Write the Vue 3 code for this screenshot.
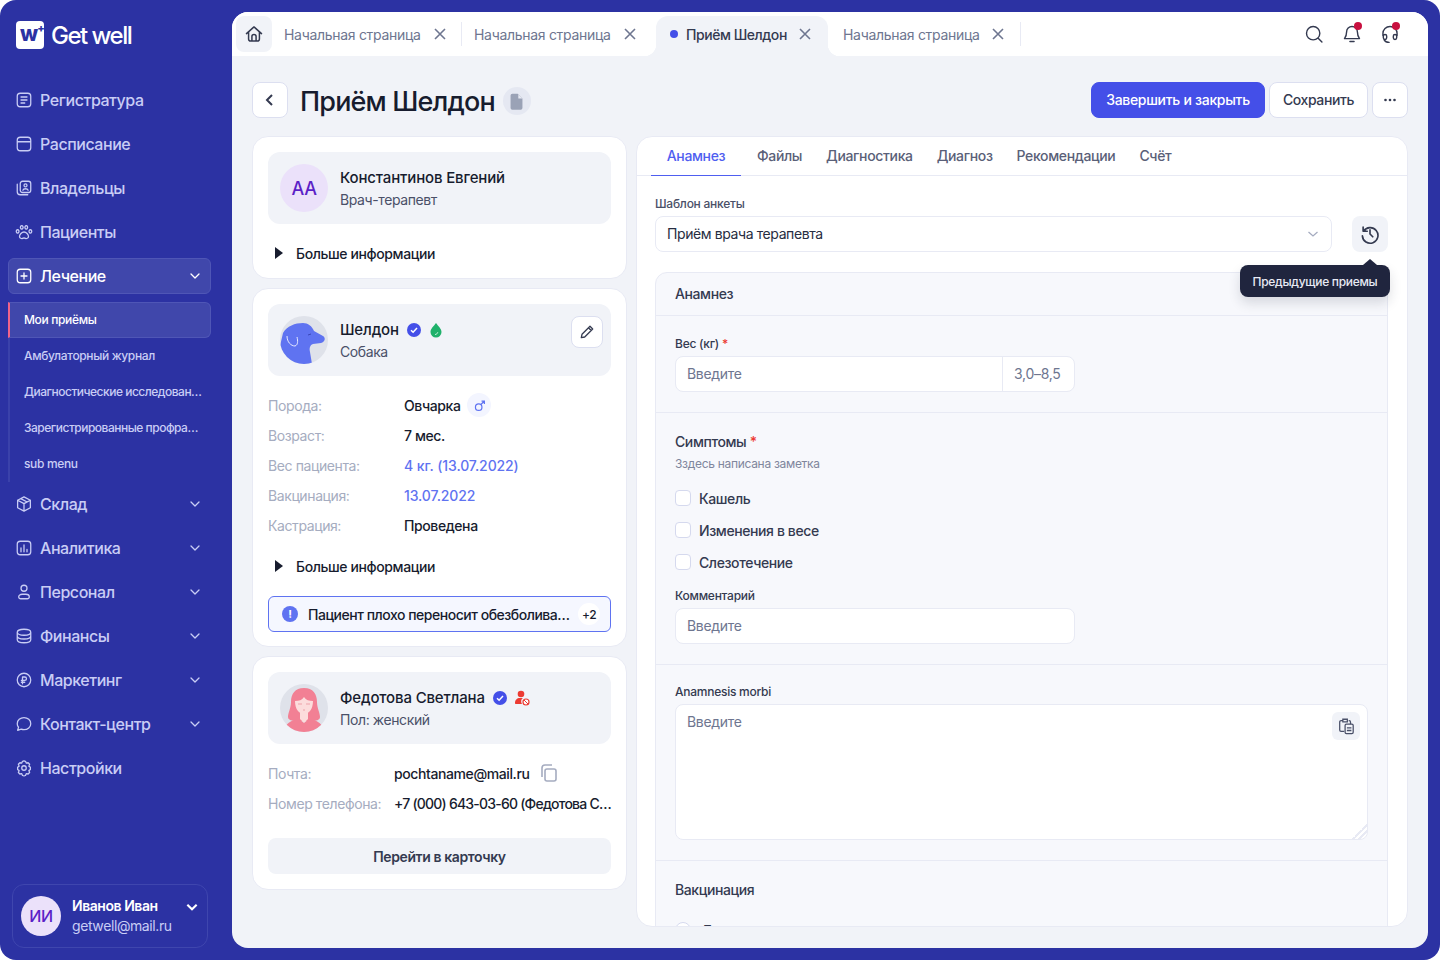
<script setup>
// пункты бокового меню
const menuTop = [
  { label: 'Регистратура', d: 'M7 3h10a4 4 0 0 1 4 4v10a4 4 0 0 1-4 4H7a4 4 0 0 1-4-4V7a4 4 0 0 1 4-4z M8 8h8 M8 12h8 M8 16h5' },
  { label: 'Расписание', d: 'M7 3h10a4 4 0 0 1 4 4v10a4 4 0 0 1-4 4H7a4 4 0 0 1-4-4V7a4 4 0 0 1 4-4z M3 9h18' },
  { label: 'Владельцы', d: 'M10 3h8a3 3 0 0 1 3 3v9a3 3 0 0 1-3 3h-8a3 3 0 0 1-3-3V6a3 3 0 0 1 3-3z M3 7v10a4 4 0 0 0 4 4h10 M14 6.500a2 2 0 1 0 0 4 2 2 0 0 0 0-4z M10.500 15c.5-1.500 2-2 3.500-2s3 .5 3.500 2' },
  { label: 'Пациенты', d: 'M12 12c-3 0-6 3.500-6 6 0 2.500 3 3 4 2.500s3-.5 4 0 4 0 4-2.500c0-2.500-3-6-6-6z M9 3.500a1.800 2.300 0 1 0 .01 0z M15 3.500a1.800 2.300 0 1 0 .01 0z M3.500 9a1.800 2.200 0 1 0 .01 0z M20.500 9a1.800 2.200 0 1 0 .01 0z' }
]

const menuBottom = [
  { label: 'Склад', arrow: true, d: 'M12 2.500l8.500 4.500v10L12 21.500 3.500 17V7z M3.500 7L12 11.500 20.500 7 M12 11.500v10 M7.700 4.800l8.500 4.500' },
  { label: 'Аналитика', arrow: true, d: 'M7 3h10a4 4 0 0 1 4 4v10a4 4 0 0 1-4 4H7a4 4 0 0 1-4-4V7a4 4 0 0 1 4-4z M8 17v-5 M12 17V8 M16 17v-3' },
  { label: 'Персонал', arrow: true, d: 'M12 3a4 4 0 1 0 0 8 4 4 0 0 0 0-8z M9.500 15h5a4.500 3 0 0 1 4.500 3v.5a2.500 2.500 0 0 1-2.500 2.500h-9A2.500 2.500 0 0 1 5 18.500V18a4.500 3 0 0 1 4.500-3z' },
  { label: 'Финансы', arrow: true, d: 'M12 3c5 0 9 1.500 9 4s-4 4-9 4-9-1.500-9-4 4-4 9-4z M3 7v10c0 2.500 4 4 9 4s9-1.500 9-4V7 M3 12c0 2.500 4 4 9 4s9-1.500 9-4' },
  { label: 'Маркетинг', arrow: true, d: 'M12 3a9 9 0 1 0 0 18 9 9 0 0 0 0-18z M10 17V8h3a2.300 2.300 0 0 1 0 4.600H8.500 M8.500 15H13' },
  { label: 'Контакт-центр', arrow: true, d: 'M12 3.500c5 0 9 3.400 9 8s-4 8-9 8c-1.300 0-2.600-.2-3.700-.7L3.500 20.500l1.200-4.200C3.700 15 3 13.300 3 11.500c0-4.600 4-8 9-8z' },
  { label: 'Настройки', arrow: false, d: 'M12 15a3 3 0 1 0 0-6 3 3 0 0 0 0 6z M12 2.500l2 .5 1 2.500 2.500-.5 2 2-1 2.500 2 1.500v3l-2 1.500 1 2.500-2 2-2.500-.5-1 2.500-2 .5-2-.5-1-2.500-2.500.5-2-2 1-2.500-2-1.500v-3l2-1.500-1-2.500 2-2 2.500.5 1-2.500z' }
]

const subMenu = ['Мои приёмы', 'Амбулаторный журнал', 'Диагностические исследован…', 'Зарегистрированные профра…', 'sub menu']

const contentTabs = ['Анамнез', 'Файлы', 'Диагностика', 'Диагноз', 'Рекомендации', 'Счёт']

const symptoms = ['Кашель', 'Изменения в весе', 'Слезотечение']
</script>

<template>
  <div class="app">
    <!-- боковое меню -->
    <aside class="sidebar">
      <div class="logo">
        <span class="logo-mark"><span>w</span><i>+</i></span>
        <span class="logo-text">Get well</span>
      </div>

      <nav class="nav">
        <a v-for="item in menuTop" :key="item.label" class="nav-item">
          <svg class="nav-icon" viewBox="0 0 24 24"><path :d="item.d" /></svg>
          {{ item.label }}
        </a>

        <a class="nav-item open">
          <svg class="nav-icon" viewBox="0 0 24 24"><path d="M7 3h10a4 4 0 0 1 4 4v10a4 4 0 0 1-4 4H7a4 4 0 0 1-4-4V7a4 4 0 0 1 4-4z M12 8v8 M8 12h8" /></svg>
          Лечение
          <svg class="chev" viewBox="0 0 12 12"><path d="M2 4l4 4 4-4" /></svg>
        </a>
        <div class="submenu">
          <a v-for="(s, i) in subMenu" :key="s" class="sub-item" :class="{ active: i === 0, long: i === 2 || i === 3 }">{{ s }}</a>
        </div>

        <a v-for="item in menuBottom" :key="item.label" class="nav-item">
          <svg class="nav-icon" viewBox="0 0 24 24"><path :d="item.d" /></svg>
          {{ item.label }}
          <svg v-if="item.arrow" class="chev" viewBox="0 0 12 12"><path d="M2 4l4 4 4-4" /></svg>
        </a>
      </nav>

      <div class="user">
        <div class="user-ava">ИИ</div>
        <div class="user-info">
          <div class="user-name">Иванов Иван</div>
          <div class="user-mail">getwell@mail.ru</div>
        </div>
        <svg class="user-chev" viewBox="0 0 12 12"><path d="M2 4l4 4 4-4" /></svg>
      </div>
    </aside>

    <main class="main">
      <!-- вкладки -->
      <header class="topbar">
        <button class="home">
          <svg viewBox="0 0 24 24"><path d="M3 11.500L12 3.500l9 8 M5.500 9.500V18a2.500 2.500 0 0 0 2.500 2.500h8a2.500 2.500 0 0 0 2.500-2.500V9.500 M9.500 20.500V15a2.500 2.500 0 0 1 5 0v5.500" /></svg>
        </button>
        <div class="tab first">
          <span>Начальная страница</span>
          <svg class="close" viewBox="0 0 16 16"><path d="M3 3l10 10M13 3L3 13" /></svg>
        </div>
        <div class="tab plain">
          <span>Начальная страница</span>
          <svg class="close" viewBox="0 0 16 16"><path d="M3 3l10 10M13 3L3 13" /></svg>
        </div>
        <div class="tab current">
          <i class="dot"></i>
          <span>Приём Шелдон</span>
          <svg class="close" viewBox="0 0 16 16"><path d="M3 3l10 10M13 3L3 13" /></svg>
        </div>
        <div class="tab last">
          <span>Начальная страница</span>
          <svg class="close" viewBox="0 0 16 16"><path d="M3 3l10 10M13 3L3 13" /></svg>
        </div>
        <div class="top-icons">
          <span class="top-icon">
            <svg viewBox="0 0 24 24"><path d="M11 3a8 8 0 1 0 0 16 8 8 0 0 0 0-16z M17 17l4.500 4.500" /></svg>
          </span>
          <span class="top-icon">
            <svg viewBox="0 0 24 24"><path d="M12 3a6.500 6.500 0 0 0-6.500 6.500c0 4.500-1 6-2.500 8h18c-1.500-2-2.500-3.500-2.500-8A6.500 6.500 0 0 0 12 3z M9.500 21h5" /></svg>
            <i class="red"></i>
          </span>
          <span class="top-icon">
            <svg viewBox="0 0 24 24"><path d="M3.500 14v-2.500a8.500 8.500 0 0 1 17 0V14 M6 12.500a2 2 0 0 1 2 2v2a2 2 0 0 1-4 0v-2a2 2 0 0 1 2-2z M18 12.500a2 2 0 0 1 2 2v2a2 2 0 0 1-4 0v-2a2 2 0 0 1 2-2z M5 19c1 2 3 3 6 3" /></svg>
            <i class="red"></i>
          </span>
        </div>
      </header>

      <div class="page">
        <div class="page-head">
          <button class="icon-btn">
            <svg viewBox="0 0 16 16" class="back"><path d="M10 3L5 8l5 5" /></svg>
          </button>
          <h1>Приём Шелдон</h1>
          <span class="doc-badge">
            <svg viewBox="0 0 16 16"><path d="M4.500 1.500H9l4 4v8a1.500 1.500 0 0 1-1.500 1.500h-7A1.500 1.500 0 0 1 3 13.500V3a1.500 1.500 0 0 1 1.500-1.500z" /><path d="M9.500 2v3.500H13z" fill="#e5e8f2" /></svg>
          </span>
          <div class="head-actions">
            <button class="btn primary">Завершить и закрыть</button>
            <button class="btn save">Сохранить</button>
            <button class="icon-btn">
              <svg viewBox="0 0 16 16" class="more"><circle cx="3.500" cy="8" r="1.300" /><circle cx="8" cy="8" r="1.300" /><circle cx="12.500" cy="8" r="1.300" /></svg>
            </button>
          </div>
        </div>

        <div class="columns">
          <div class="left">
            <!-- врач -->
            <section class="card">
              <div class="person">
                <div class="ava-letters">АА</div>
                <div>
                  <div class="person-name">Константинов Евгений</div>
                  <div class="person-sub">Врач-терапевт</div>
                </div>
              </div>
              <div class="more-info first-more"><i class="tri"></i>Больше информации</div>
            </section>

            <!-- пациент -->
            <section class="card pet-card">
              <div class="person">
                <svg class="ava" viewBox="0 0 48 48">
                  <defs><clipPath id="c1"><circle cx="24" cy="24" r="24" /></clipPath></defs>
                  <circle cx="24" cy="24" r="24" fill="#dfe2ea" />
                  <g clip-path="url(#c1)">
                    <path d="M3 17C7 10 15 7 23 7c5 0 9 3 11 8l9 5c3 2 2 6-2 7l-8 1c-3 1-4 4-3 8l2 12H0V30z" fill="#5f73f1" />
                    <path d="M7 20c0 6 4 10 8 10 3-1 3-5 2-9" fill="none" stroke="#e8ebff" stroke-width="1" />
                    <path d="M28 19l3-1" stroke="#3a47b8" stroke-width="1" />
                  </g>
                </svg>
                <div>
                  <div class="person-name">Шелдон
                    <svg class="check" viewBox="0 0 16 16"><circle cx="8" cy="8" r="7" fill="#444fe8" /><path d="M5 8.200l2.100 2L11 6" fill="none" stroke="#fff" stroke-width="1.500" /></svg>
                    <svg class="drop" viewBox="0 0 16 16"><path d="M8 1c2 3 5.500 5.500 5.500 9a5.500 5.500 0 0 1-11 0c0-3.500 3.500-6 5.500-9z" fill="#1fb16b" /><path d="M7 12.500c1.500 0 2.500-1 2.800-2.300" fill="none" stroke="#bff0d6" stroke-width="1" /></svg>
                  </div>
                  <div class="person-sub">Собака</div>
                </div>
                <button class="edit">
                  <svg viewBox="0 0 16 16"><path d="M11 2.300l2.700 2.700-8 8-3.400.7.700-3.400z M9.500 3.800l2.700 2.700" /></svg>
                </button>
              </div>

              <dl class="rows pet-rows">
                <dt>Порода:</dt>
                <dd>Овчарка
                  <span class="gender">
                    <svg viewBox="0 0 16 16"><path d="M7 6a4 4 0 1 0 0 8 4 4 0 0 0 0-8z M10 6.500L14 2.500 M10.500 2.500H14V6" /></svg>
                  </span>
                </dd>
                <dt>Возраст:</dt><dd>7 мес.</dd>
                <dt>Вес пациента:</dt><dd class="link">4 кг. (13.07.2022)</dd>
                <dt>Вакцинация:</dt><dd class="link">13.07.2022</dd>
                <dt>Кастрация:</dt><dd>Проведена</dd>
              </dl>

              <div class="more-info"><i class="tri"></i>Больше информации</div>

              <div class="alert">
                <span class="alert-icon">!</span>
                <span class="alert-text">Пациент плохо переносит обезболива…</span>
                <span class="alert-count">+2</span>
              </div>
            </section>

            <!-- владелец -->
            <section class="card">
              <div class="person">
                <svg class="ava" viewBox="0 0 48 48">
                  <defs><clipPath id="c2"><circle cx="24" cy="24" r="24" /></clipPath></defs>
                  <circle cx="24" cy="24" r="24" fill="#dfe2ea" />
                  <g clip-path="url(#c2)">
                    <path d="M24 4c-9 0-13 6-13 14 0 6-3 11-3 15 0 3 4 4 8 4h16c4 0 8-1 8-4 0-4-3-9-3-15 0-8-4-14-13-14z" fill="#f28094" />
                    <path d="M15 17c4 0 7-1 9-4 2 3 5 4 9 4 0 8-4 13-9 13s-9-5-9-13z" fill="#fcdcdc" />
                    <path d="M20 27h8v8l-4 4-4-4z" fill="#fcdcdc" />
                    <path d="M4 48c0-8 7-12 15-13l5 4 5-4c8 1 15 5 15 13z" fill="#f28094" />
                    <path d="M18 20h4M26 20h4M23 26h2" stroke="#e78b96" stroke-width=".7" />
                  </g>
                </svg>
                <div>
                  <div class="person-name">Федотова Светлана
                    <svg class="check" viewBox="0 0 16 16"><circle cx="8" cy="8" r="7" fill="#444fe8" /><path d="M5 8.200l2.100 2L11 6" fill="none" stroke="#fff" stroke-width="1.500" /></svg>
                    <svg class="blocked" viewBox="0 0 16 16"><circle cx="7" cy="4" r="3.300" fill="#ec3a32" /><path d="M1 13c0-3 2-5 5-5h3c-2 1-2.500 4-1 6H2c-.7 0-1-.4-1-1z" fill="#ec3a32" /><circle cx="12" cy="12" r="3" fill="#fff" stroke="#ec3a32" stroke-width="1.200" /><path d="M10 10l4 4" stroke="#ec3a32" stroke-width="1" /></svg>
                  </div>
                  <div class="person-sub">Пол: женский</div>
                </div>
              </div>

              <dl class="rows owner-rows">
                <dt>Почта:</dt>
                <dd>pochtaname@mail.ru
                  <svg class="copy" viewBox="0 0 18 18"><path d="M7 5h7a2 2 0 0 1 2 2v8a2 2 0 0 1-2 2H7a2 2 0 0 1-2-2V7a2 2 0 0 1 2-2z M2 13V4a3 3 0 0 1 3-3h7" /></svg>
                </dd>
                <dt>Номер телефона:</dt>
                <dd class="cut">+7 (000) 643-03-60 (Федотова С…</dd>
              </dl>

              <button class="go-card">Перейти в карточку</button>
            </section>
          </div>

          <!-- анкета -->
          <section class="form-card">
            <div class="form-tabs">
              <span v-for="(t, i) in contentTabs" :key="t" class="form-tab" :class="{ active: i === 0 }">{{ t }}</span>
            </div>

            <div class="form-body">
              <label class="lbl">Шаблон анкеты</label>
              <div class="template-row">
                <div class="select">
                  Приём врача терапевта
                  <svg class="select-chev" viewBox="0 0 12 12"><path d="M1.500 4l4.500 4 4.500-4" /></svg>
                </div>
                <div class="history-wrap">
                  <button class="history">
                    <svg viewBox="0 0 24 24"><path d="M4.500 4.500V9H9 M5 9a8.500 8.500 0 1 1-1.300 5 M12 7.500V12l3 3" /></svg>
                  </button>
                  <div class="tooltip">Предыдущие приемы</div>
                </div>
              </div>

              <div class="panel">
                <div class="panel-head">Анамнез</div>

                <div class="block">
                  <label class="lbl dark">Вес (кг) <b>*</b></label>
                  <div class="input-group">
                    <input type="text" placeholder="Введите" />
                    <span class="addon">3,0–8,5</span>
                  </div>
                </div>

                <div class="block">
                  <div class="block-title">Симптомы <b>*</b></div>
                  <div class="note">Зздесь написана заметка</div>
                  <div class="checks">
                    <label v-for="s in symptoms" :key="s" class="check-row">
                      <i class="box"></i>{{ s }}
                    </label>
                  </div>
                  <label class="lbl dark comment">Комментарий</label>
                  <input class="field" type="text" placeholder="Введите" />
                </div>

                <div class="block morbi">
                  <label class="lbl dark">Anamnesis morbi</label>
                  <div class="area-wrap">
                    <textarea placeholder="Введите"></textarea>
                    <button class="paste">
                      <svg viewBox="0 0 20 20"><path d="M6 4H4.500A1.500 1.500 0 0 0 3 5.500v9A1.500 1.500 0 0 0 4.500 16H8 M6.500 2.500h5v3h-5z M13 4h.5A1.500 1.500 0 0 1 15 5.500V8" /><rect x="9" y="8" width="9" height="10.500" rx="1.500" /><path d="M11 12h5M11 15h5" /></svg>
                    </button>
                  </div>
                </div>

                <div class="block last-block">
                  <div class="block-title">Вакцинация</div>
                  <label class="radio-row"><i class="radio"></i>Да</label>
                </div>
              </div>
            </div>
          </section>
        </div>
      </div>
    </main>
  </div>
</template>

<style>
html, body { margin: 0; background: #fff; }
</style>

<style scoped>
* { box-sizing: border-box; }

.app {
  width: 1440px;
  height: 960px;
  display: flex;
  background: #2c32a3;
  border-radius: 16px;
  overflow: hidden;
  font-family: Inter, "Noto Sans", sans-serif;
  color: #171c2e;
  font-size: 14px;
  letter-spacing: -0.4px;
}

/* боковое меню */
.sidebar {
  width: 232px;
  flex: none;
  display: flex;
  flex-direction: column;
  padding-top: 21px;
  color: #c9cdf5;
}

.logo {
  display: flex;
  align-items: center;
  height: 28px;
  padding-left: 16px;
  gap: 7px;
}

.logo-mark {
  width: 28px;
  height: 28px;
  background: #fff;
  border-radius: 4px;
  color: #2c32a3;
  font-weight: 800;
  display: flex;
  align-items: flex-start;
  padding-left: 4px;
}

.logo-mark span {
  font-size: 21px;
  line-height: 26px;
  letter-spacing: -1px;
}

.logo-mark i {
  font-style: normal;
  font-size: 11px;
  line-height: 14px;
  font-weight: 800;
}

.logo-text {
  color: #fff;
  font-size: 24px;
  font-weight: 500;
  letter-spacing: -1.5px;
}

.nav {
  margin-top: 33px;
  display: flex;
  flex-direction: column;
  gap: 8px;
}

.nav-item {
  height: 36px;
  margin: 0 21px 0 8px;
  padding: 0 9px 1px 8px;
  display: flex;
  align-items: center;
  gap: 7px;
  font-size: 16px;
  font-weight: 500;
  letter-spacing: -0.45px;
  border: 1px solid transparent;
  border-radius: 6px;
}

.nav-item.open {
  background: #4047ab;
  border-color: #4f56b6;
  color: #fff;
}

.nav-icon {
  width: 18px;
  height: 18px;
  margin-left: -2px;
  flex: none;
  fill: none;
  stroke: currentColor;
  stroke-width: 1.700;
  stroke-linecap: round;
  stroke-linejoin: round;
}

.chev {
  width: 12px;
  height: 12px;
  margin-left: auto;
  fill: none;
  stroke: currentColor;
  stroke-width: 1.300;
  stroke-linecap: round;
  stroke-linejoin: round;
}

.submenu {
  margin: 0 21px -4px 8px;
  border-left: 2px solid #3b42ab;
}

.sub-item {
  height: 36px;
  display: flex;
  align-items: center;
  padding: 0 6px 1px 14px;
  font-size: 12px;
  font-weight: 500;
  letter-spacing: -0.35px;
  white-space: nowrap;
  border-radius: 0 6px 6px 0;
}

.sub-item.long { letter-spacing: -0.5px; }

.sub-item.active {
  margin-left: -2px;
  color: #fff;
  background: #4047ab;
  border: 1px solid #4f56b6;
  border-left: 2px solid #f0638a;
}

.user {
  margin: auto 24px 12px 12px;
  height: 64px;
  display: flex;
  align-items: center;
  padding: 0 8px;
  border: 1px solid #3f46ae;
  border-radius: 12px;
  position: relative;
}

.user-ava {
  width: 40px;
  height: 40px;
  border-radius: 50%;
  background: #ebe1fa;
  color: #5b1fc7;
  display: flex;
  align-items: center;
  justify-content: center;
  font-size: 16px;
  font-weight: 500;
  flex: none;
}

.user-info { margin-left: 11px; }

.user-name {
  color: #fff;
  font-weight: 600;
  line-height: 20px;
  letter-spacing: -0.45px;
}

.user-mail {
  color: #c9cdf5;
  line-height: 20px;
}

.user-chev {
  width: 14px;
  height: 14px;
  position: absolute;
  right: 8px;
  top: 15px;
  fill: none;
  stroke: #fff;
  stroke-width: 1.800;
}

/* основная часть */
.main {
  flex: 1;
  margin: 12px 12px 12px 0;
  border-radius: 16px;
  background: #f1f3f8;
  overflow: hidden;
  display: flex;
  flex-direction: column;
}

.topbar {
  height: 44px;
  flex: none;
  background: #fff;
  display: flex;
  align-items: flex-end;
  padding-left: 4px;
}

.home {
  width: 36px;
  height: 36px;
  align-self: flex-start;
  margin-top: 4px;
  border: 0;
  padding: 0;
  border-radius: 8px;
  background: #f1f3f8;
  display: flex;
  align-items: center;
  justify-content: center;
}

.home svg {
  width: 20px;
  height: 20px;
  fill: none;
  stroke: #343a50;
  stroke-width: 1.800;
  stroke-linejoin: round;
  stroke-linecap: round;
}

.tab {
  height: 40px;
  display: flex;
  align-items: center;
  color: #6e7690;
  font-size: 14px;
  letter-spacing: -0.3px;
  white-space: nowrap;
  position: relative;
  padding-bottom: 4px;
}

.tab.first {
  width: 190px;
  padding-left: 12px;
  gap: 11px;
}

.tab.plain {
  width: 194px;
  padding-left: 12px;
  gap: 11px;
}

.tab.first::after,
.tab.last::after {
  content: "";
  position: absolute;
  right: 0;
  top: 6px;
  height: 24px;
  width: 1px;
  background: #e8eaf4;
}

.tab.current {
  width: 172px;
  padding-left: 14px;
  color: #343a50;
  font-weight: 500;
  letter-spacing: -0.45px;
  background: #f1f3f8;
  border-radius: 12px 12px 0 0;
}

.tab.current::before,
.tab.current::after {
  content: "";
  position: absolute;
  bottom: 0;
  width: 12px;
  height: 12px;
}

.tab.current::before {
  left: -12px;
  background: radial-gradient(circle at 0 0, #fff 12px, #f1f3f8 12.500px);
}

.tab.current::after {
  right: -12px;
  background: radial-gradient(circle at 100% 0, #fff 12px, #f1f3f8 12.500px);
}

.tab.last {
  width: 193px;
  padding-left: 15px;
  gap: 10px;
}

.dot {
  width: 8px;
  height: 8px;
  border-radius: 50%;
  background: #444fe8;
  margin-right: 8px;
}

.close {
  width: 16px;
  height: 16px;
  flex: none;
  fill: none;
  stroke: #6e7690;
  stroke-width: 1.600;
}

.tab.current .close { margin-left: 10px; }

.top-icons {
  margin-left: auto;
  align-self: center;
  display: flex;
  gap: 22px;
  padding-right: 30px;
}

.top-icon {
  width: 16px;
  height: 18px;
  position: relative;
  display: block;
}

.top-icon svg {
  width: 20px;
  height: 20px;
  margin: -1px -2px;
  fill: none;
  stroke: #343a50;
  stroke-width: 1.700;
  stroke-linecap: round;
  stroke-linejoin: round;
}

.red {
  position: absolute;
  right: -2px;
  top: -3px;
  width: 8px;
  height: 8px;
  border-radius: 50%;
  background: #c8103f;
}

.page {
  flex: 1;
  min-height: 0;
  padding: 26px 20px 21px;
  display: flex;
  flex-direction: column;
}

.page-head {
  display: flex;
  align-items: center;
  height: 36px;
  flex: none;
}

h1 {
  margin: 0 0 0 12px;
  padding-top: 2px;
  font-size: 27px;
  font-weight: 500;
  letter-spacing: -0.83px;
  color: #171c2e;
}

.icon-btn {
  width: 36px;
  height: 36px;
  padding: 0;
  border: 1px solid #dcdff0;
  border-radius: 8px;
  background: #fff;
  display: flex;
  align-items: center;
  justify-content: center;
}

.back {
  width: 16px;
  height: 16px;
  fill: none;
  stroke: #343a50;
  stroke-width: 2;
}

.more {
  width: 16px;
  height: 16px;
  fill: #343a50;
}

.doc-badge {
  width: 28px;
  height: 28px;
  margin-left: 8px;
  margin-top: 2px;
  border-radius: 50%;
  background: #e5e8f2;
  display: flex;
  align-items: center;
  justify-content: center;
}

.doc-badge svg {
  width: 19px;
  height: 19px;
  fill: #9aa2b6;
}

.head-actions {
  margin-left: auto;
  display: flex;
  gap: 4px;
}

.btn {
  width: 99px;
  height: 36px;
  padding: 0 0 1px;
  background: #fff;
  border: 1px solid #dcdff0;
  border-radius: 8px;
  font-family: inherit;
  font-size: 14px;
  font-weight: 500;
  letter-spacing: inherit;
  color: #343a50;
}

.btn.primary {
  width: 174px;
  background: #444fe8;
  border-color: #444fe8;
  color: #fff;
  letter-spacing: -0.3px;
}

.columns {
  margin-top: 18px;
  flex: 1;
  min-height: 0;
  display: grid;
  grid-template-columns: 375px 772px;
  column-gap: 9px;
}

.left {
  display: flex;
  flex-direction: column;
  gap: 9px;
}

.card {
  background: #fff;
  border: 1px solid #e8eaf4;
  border-radius: 16px;
  padding: 15px;
}

.pet-card { padding-bottom: 14px; }

.person {
  height: 72px;
  background: #f1f3f8;
  border-radius: 12px;
  display: flex;
  align-items: center;
  padding: 0 8px 0 12px;
  gap: 12px;
  position: relative;
}

.ava-letters {
  width: 48px;
  height: 48px;
  border-radius: 50%;
  background: #ebe1fa;
  color: #5b1fc7;
  font-size: 18px;
  font-weight: 500;
  display: flex;
  align-items: center;
  justify-content: center;
  flex: none;
}

.ava {
  width: 48px;
  height: 48px;
  flex: none;
}

.person-name {
  font-size: 15px;
  font-weight: 500;
  line-height: 24px;
  letter-spacing: -0.15px;
  margin-top: 2px;
  display: flex;
  align-items: center;
}

.person-sub {
  color: #4a5068;
  line-height: 20px;
  margin: 0 0 2px;
}

.check {
  width: 16px;
  height: 16px;
  margin-left: 7px;
}

.drop {
  width: 16px;
  height: 16px;
  margin-left: 6px;
}

.blocked {
  width: 16px;
  height: 16px;
  margin-left: 6px;
}

.edit {
  position: absolute;
  right: 8px;
  top: 12px;
  width: 32px;
  height: 32px;
  padding: 0;
  background: #fff;
  border: 1px solid #dcdff0;
  border-radius: 8px;
  display: flex;
  align-items: center;
  justify-content: center;
}

.edit svg {
  width: 16px;
  height: 16px;
  fill: none;
  stroke: #343a50;
  stroke-width: 1.300;
  stroke-linejoin: round;
}

.more-info {
  height: 20px;
  margin-top: 16px;
  display: flex;
  align-items: center;
  font-weight: 500;
  padding-left: 7px;
}

.first-more {
  margin-top: 19px;
}

.tri {
  width: 0;
  height: 0;
  border-left: 8px solid #171c2e;
  border-top: 6px solid transparent;
  border-bottom: 6px solid transparent;
  margin-right: 13px;
}

.rows {
  margin: 14px 0 0;
  display: grid;
  grid-auto-rows: 30px;
  align-items: center;
}

.pet-rows { grid-template-columns: 136px 1fr; }

.owner-rows {
  grid-template-columns: 126px 218px;
}

dt { color: #a5acc0; }

dd {
  margin: 0;
  font-weight: 500;
  display: flex;
  align-items: center;
  min-width: 0;
}

dd.link {
  color: #5f73f1;
  letter-spacing: -0.1px;
}

dd.cut {
  white-space: nowrap;
  letter-spacing: -0.78px;
}

.gender {
  width: 24px;
  height: 24px;
  margin-left: 7px;
  border-radius: 50%;
  background: #f3f5ff;
  display: flex;
  align-items: center;
  justify-content: center;
}

.gender svg {
  width: 13px;
  height: 13px;
  fill: none;
  stroke: #5f73f1;
  stroke-width: 1.500;
}

.copy {
  width: 18px;
  height: 18px;
  margin-left: 10px;
  fill: none;
  stroke: #a5acc0;
  stroke-width: 1.600;
}

.alert {
  margin-top: 20px;
  height: 36px;
  border: 1px solid #5f73f1;
  background: #f5f7ff;
  border-radius: 6px;
  display: flex;
  align-items: center;
  padding: 0 10px 0 13px;
}

.alert-icon {
  width: 16px;
  height: 16px;
  flex: none;
  border-radius: 50%;
  background: #5f73f1;
  color: #fff;
  font-size: 11px;
  font-weight: 700;
  display: flex;
  align-items: center;
  justify-content: center;
}

.alert-text {
  margin-left: 10px;
  flex: 1;
  min-width: 0;
  font-weight: 500;
  letter-spacing: -0.48px;
  white-space: nowrap;
}

.alert-count {
  width: 22px;
  height: 22px;
  margin-left: 7px;
  flex: none;
  background: #fff;
  border-radius: 50%;
  font-size: 12px;
  font-weight: 500;
  display: flex;
  align-items: center;
  justify-content: center;
}

.go-card {
  margin-top: 20px;
  width: 100%;
  height: 36px;
  border: 0;
  border-radius: 8px;
  background: #f1f3f8;
  font-family: inherit;
  font-size: 14px;
  font-weight: 600;
  letter-spacing: inherit;
  color: #343a50;
}

/* анкета */
.form-card {
  background: #fff;
  border: 1px solid #e8eaf4;
  border-radius: 16px;
  overflow: hidden;
  display: flex;
  flex-direction: column;
  min-height: 0;
}

.form-tabs {
  height: 39px;
  flex: none;
  border-bottom: 1px solid #e8eaf4;
  padding-left: 14px;
  display: flex;
}

.form-tab {
  margin-right: 24px;
  line-height: 38px;
  font-weight: 500;
  color: #5a6078;
  height: 39px;
  letter-spacing: -0.35px;
}

.form-tab.active {
  width: 90px;
  margin-right: 16px;
  text-align: center;
  color: #4f5ef0;
  border-bottom: 1px solid #4f5ef0;
}

.form-body {
  padding: 20px 19px 0 18px;
  flex: 1;
  min-height: 0;
  overflow: hidden;
}

.lbl {
  display: block;
  font-size: 12px;
  font-weight: 500;
  line-height: 16px;
  letter-spacing: -0.25px;
  color: #4a5068;
  margin-bottom: 4px;
}

.lbl.dark { color: #343a50; }
.lbl b, .block-title b { color: #ec3a32; font-weight: 500; }

.template-row {
  display: flex;
  gap: 20px;
}

.select {
  flex: 1;
  height: 36px;
  background: #fff;
  border: 1px solid #e8eaf4;
  border-radius: 8px;
  padding: 0 12px 1px 11px;
  display: flex;
  align-items: center;
  justify-content: space-between;
  color: #272d42;
}

.select-chev {
  width: 12px;
  height: 12px;
  fill: none;
  stroke: #a5acc0;
  stroke-width: 1.300;
}

.history-wrap {
  position: relative;
  width: 36px;
}

.history {
  width: 36px;
  height: 36px;
  padding: 0;
  border: 0;
  border-radius: 8px;
  background: #f1f3f8;
  display: flex;
  align-items: center;
  justify-content: center;
}

.history svg {
  width: 22px;
  height: 22px;
  fill: none;
  stroke: #343a50;
  stroke-width: 1.800;
  stroke-linecap: round;
  stroke-linejoin: round;
}

.tooltip {
  position: absolute;
  top: 49px;
  right: -2px;
  width: 150px;
  height: 32px;
  border-radius: 8px;
  background: #20253e;
  color: #e8eaf4;
  font-size: 12px;
  font-weight: 500;
  letter-spacing: -0.3px;
  display: flex;
  align-items: center;
  justify-content: center;
  box-shadow: 0 6px 12px rgba(32, 37, 62, 0.15);
  z-index: 2;
}

.tooltip::before {
  content: "";
  position: absolute;
  top: -6px;
  right: 13px;
  border-left: 7px solid transparent;
  border-right: 7px solid transparent;
  border-bottom: 6px solid #20253e;
}

.panel {
  margin-top: 20px;
  background: #f7f8fc;
  border: 1px solid #e8eaf4;
  border-radius: 12px 12px 0 0;
}

.panel-head {
  height: 43px;
  padding: 0 0 1px 19px;
  display: flex;
  align-items: center;
  font-weight: 500;
  color: #343a50;
  border-bottom: 1px solid #e8eaf4;
}

.block {
  padding: 20px 19px;
  border-bottom: 1px solid #e8eaf4;
}

.input-group {
  width: 400px;
  height: 36px;
  display: flex;
  background: #fff;
  border: 1px solid #e8eaf4;
  border-radius: 8px;
}

.input-group input {
  flex: 1;
  min-width: 0;
  border: 0;
  background: transparent;
  padding: 0 11px 1px;
  font: inherit;
  letter-spacing: -0.3px;
  outline: none;
}

.addon {
  width: 72px;
  border-left: 1px solid #e8eaf4;
  color: #6e7690;
  display: flex;
  align-items: center;
  padding: 0 0 1px 11px;
  letter-spacing: -0.3px;
}

input::placeholder,
textarea::placeholder {
  color: #6e7690;
  opacity: 1;
}

.block-title {
  font-weight: 500;
  line-height: 18px;
  color: #343a50;
}

.note {
  margin-top: 5px;
  font-size: 12px;
  line-height: 16px;
  letter-spacing: -0.3px;
  color: #7f869c;
}

.checks {
  margin-top: 18px;
  display: flex;
  flex-direction: column;
  gap: 16px;
}

.check-row {
  height: 16px;
  display: flex;
  align-items: center;
  font-weight: 500;
  color: #343a50;
}

.box {
  width: 16px;
  height: 16px;
  margin-right: 8px;
  background: #fff;
  border: 1px solid #d5d9ee;
  border-radius: 4px;
}

.comment { margin-top: 18px; }

.field {
  display: block;
  width: 400px;
  height: 36px;
  background: #fff;
  border: 1px solid #e8eaf4;
  border-radius: 8px;
  padding: 0 11px 1px;
  font: inherit;
  letter-spacing: -0.3px;
  outline: none;
}

.morbi { padding-top: 19px; }

.area-wrap {
  position: relative;
}

textarea {
  display: block;
  width: 693px;
  height: 136px;
  background: #fff;
  border: 1px solid #e8eaf4;
  border-radius: 8px;
  padding: 7px 11px;
  font: inherit;
  letter-spacing: -0.3px;
  line-height: 20px;
  outline: none;
}

textarea::-webkit-resizer {
  background: linear-gradient(135deg, transparent 50%, #e8eaf4 50%, #e8eaf4 58%, transparent 58%, transparent 70%, #e8eaf4 70%, #e8eaf4 78%, transparent 78%);
}

.paste {
  position: absolute;
  right: 8px;
  top: 8px;
  width: 28px;
  height: 28px;
  padding: 0;
  border: 0;
  border-radius: 6px;
  background: #f1f3f8;
  display: flex;
  align-items: center;
  justify-content: center;
}

.paste svg {
  width: 18px;
  height: 18px;
  fill: none;
  stroke: #4a5068;
  stroke-width: 1.400;
}

.last-block { border-bottom: 0; }

.radio-row {
  margin-top: 23px;
  height: 16px;
  display: flex;
  align-items: center;
  font-weight: 500;
  color: #343a50;
}

.radio {
  width: 16px;
  height: 16px;
  margin-right: 10px;
  background: #fff;
  border: 1px solid #d5d9ee;
  border-radius: 50%;
}
</style>
